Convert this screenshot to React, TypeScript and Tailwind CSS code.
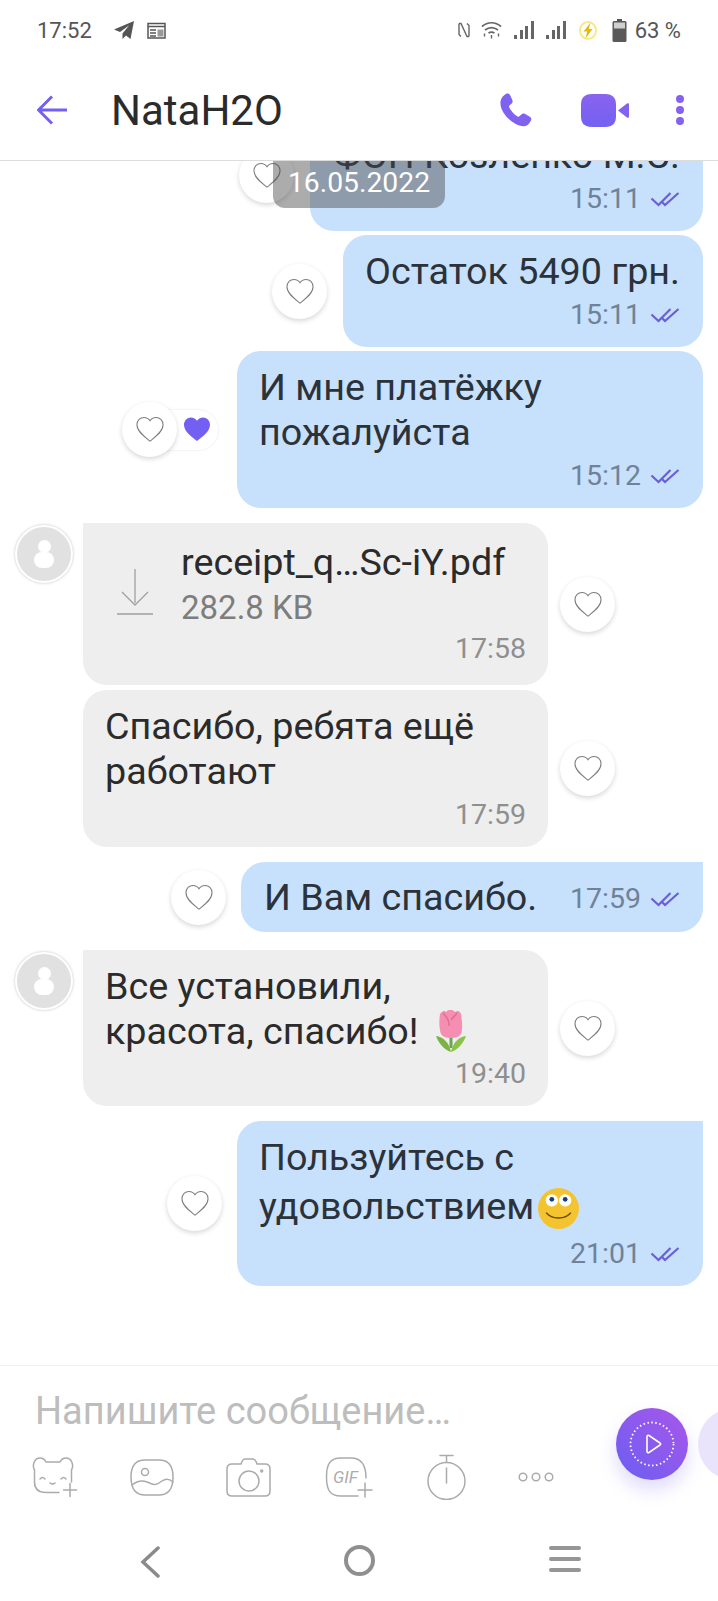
import React from "react";

const Heart = ({ filled = false }: { filled?: boolean }) => (
  <svg width="30" height="27" viewBox="0 0 30 28" fill={filled ? "#7360f2" : "none"} stroke={filled ? "none" : "#7d7d7d"} strokeWidth="1.1">
    <path d="M15 26C10 22 1.5 16.5 1.5 9.2 1.5 4.6 4.9 1.5 8.7 1.5c2.8 0 5 1.3 6.3 3.5 1.3-2.2 3.5-3.5 6.3-3.5 3.8 0 7.2 3.1 7.2 7.7C28.500 16.500 20 22 15 26Z" />
  </svg>
);

const HeartBtn = () => (
  <div className="w-[55px] h-[55px] rounded-full bg-white shadow-[0_2px_5px_rgba(0,0,0,0.16)] flex items-center justify-center shrink-0 relative z-10">
    <Heart />
  </div>
);

const Check = () => (
  <svg width="30" height="16" viewBox="0 0 29 16" fill="none" stroke="#6a5fd8" strokeWidth="2.2" className="ml-[9px]">
    <path d="M1 7.500l7 6.500L20 2" />
    <path d="M11 10.500l3.500 3.500L28 2" />
  </svg>
);

const Time = ({ t, out = false }: { t: string; out?: boolean }) => (
  <span className={`text-[28.5px] leading-[38px] flex items-center ${out ? "text-[#6f8298]" : "text-[#8f8f8f]"}`}>
    {t}
    {out && <Check />}
  </span>
);

const Out = ({
  lines,
  t,
  w,
  gap,
  mt,
  heart,
  tail = false,
}: {
  lines: React.ReactNode[];
  t: string;
  w: number;
  gap: number;
  mt: number;
  heart?: React.ReactNode;
  tail?: boolean;
}) => (
  <div className="flex justify-end items-center pr-[15px]" style={{ marginTop: mt }}>
    <div style={{ marginRight: gap }}>{heart ?? <HeartBtn />}</div>
    <div
      className={`bg-[#c7e0fb] rounded-[24px] pl-[22px] pr-[23px] pt-[14px] pb-[13px] text-[#2b323a] ${tail ? "rounded-tr-none" : ""}`}
      style={{ width: w }}
    >
      {lines.map((l, i) => (
        <div key={i} className="leading-[45px] whitespace-nowrap">
          {l}
        </div>
      ))}
      <div className="flex justify-end mt-[2px]">
        <Time t={t} out />
      </div>
    </div>
  </div>
);

const Avatar = () => (
  <div className="w-[58px] h-[58px] rounded-full bg-[#e1e1e1] border-2 border-white shadow-[0_0_3px_rgba(0,0,0,0.25)] flex flex-col items-center justify-center shrink-0 self-start mt-[2px]">
    <div className="w-[13px] h-[13px] rounded-full bg-white" />
    <div className="w-[20px] h-[16px] rounded-[8px] bg-white -mt-[1px]" />
  </div>
);

const In = ({ children, t, mt, avatar = false, h, pb = 13 }: { children: React.ReactNode; t: string; mt: number; avatar?: boolean; h: number; pb?: number }) => (
  <div className="flex items-center pl-[15px]" style={{ marginTop: mt }}>
    <div className="w-[58px] mr-[10px] self-start shrink-0">{avatar && <Avatar />}</div>
    <div
      className={`bg-[#eeeeee] rounded-[24px] w-[465px] flex flex-col px-[22px] pt-[14px] text-[#2b2b2b] ${avatar ? "rounded-tl-none" : ""}`}
      style={{ height: h, paddingBottom: pb }}
    >
      <div className="flex-1">{children}</div>
      <div className="flex justify-end">
        <Time t={t} />
      </div>
    </div>
    <div className="ml-[12px]">
      <HeartBtn />
    </div>
  </div>
);

const Tulip = () => (
  <svg width="30" height="42" viewBox="0 0 30 42" className="inline-block align-middle ml-[18px] -translate-y-[3px]">
    <path d="M15 26v12" stroke="#6aa84f" strokeWidth="3" />
    <path d="M15 42C8 40 2 32 0 26c7 1 13 6 15 16Z" fill="#7cb342" />
    <path d="M15 42c7-2 13-10 15-16-7 1-13 6-15 16Z" fill="#8bc34a" />
    <path d="M4 4c2-3 5-4 6-2 2-3 7-3 9 0 2-2 5-1 6 2 1 7 2 14 0 20-2 3-6 4-10 4s-8-1-10-4C3 18 3 11 4 4Z" fill="#f48fb1" />
    <path d="M7 3c3 3 7 7 6 13M21 3c-2 3-5 5-6 7" stroke="#e56a98" strokeWidth="1.500" fill="none" />
  </svg>
);

const Smile = () => (
  <svg width="41" height="41" viewBox="0 0 40 40" className="inline-block align-middle ml-[4px] translate-y-[-1px]">
    <circle cx="20" cy="20" r="20" fill="#f4c430" />
    <ellipse cx="13.500" cy="12" rx="6" ry="6" fill="#fff" />
    <ellipse cx="26.500" cy="12" rx="6" ry="6" fill="#fff" />
    <circle cx="13.500" cy="11" r="2.300" fill="#1c3c78" />
    <circle cx="26.500" cy="11" r="2.300" fill="#1c3c78" />
    <path d="M8 24c5 7 19 7 24 0" stroke="#6b4a10" strokeWidth="1.500" fill="none" />
  </svg>
);

const ToolIcon = ({ children, w = 46, cls = "" }: { children: React.ReactNode; w?: number; cls?: string }) => (
  <svg width={w} height="46" viewBox={`0 0 ${w} 46`} fill="none" stroke="#ababab" strokeWidth="1.500" strokeLinecap="round" className={`shrink-0 ${cls}`}>
    {children}
  </svg>
);

const Signal = ({ cls }: { cls: string }) => (
  <svg width="20" height="18" viewBox="0 0 20 18" fill="#666" className={cls}>
    <rect x="0" y="14" width="3" height="4" />
    <rect x="6" y="9" width="3" height="9" />
    <rect x="11" y="5" width="3" height="13" />
    <rect x="17" y="0" width="3" height="18" />
  </svg>
);

export default function App() {
  return (
    <div className="w-[718px] h-[1601px] bg-white flex flex-col overflow-hidden relative font-['Roboto',sans-serif] text-[37.7px]">
      {/* status bar */}
      <div className="h-[60px] flex items-center pl-[37px] pr-[37px] text-[22px] text-[#555555] shrink-0">
        <span>17:52</span>
        <svg width="21" height="20" viewBox="0 0 21 20" className="ml-[22px]" fill="#555">
          <path d="M20 1 0 9.500l6 2.500 9-6.500-6.500 8V19l3.500-3.500 4.500 3.500Z" />
        </svg>
        <svg width="19" height="17" viewBox="0 0 19 17" className="ml-[12px]" fill="none" stroke="#555" strokeWidth="1.500">
          <rect x="1" y="1.500" width="17" height="14.500" />
          <path d="M1 4.500h17M3 8h6M3 11h6M3 14h6" />
          <rect x="10.500" y="7.500" width="6" height="7" fill="#999" stroke="none" />
        </svg>
        <div className="flex-1" />
        <svg width="14" height="16" viewBox="0 0 14 16" fill="none" stroke="#666" strokeWidth="1.400">
          <path d="M2 1.500h2l6 13h2M2 1.500v11l2 2h0M12 14.500v-11l-2-2" />
        </svg>
        <svg width="21" height="18" viewBox="0 0 21 18" className="ml-[10px]" fill="none" stroke="#666" strokeWidth="1.700">
          <path d="M1 5.500c5.500-5 13.500-5 19 0M4 9c4-3 9-3 13 0M7.500 12c2-1.300 4-1.300 6 0" />
          <path d="M10.500 14v3.500M3.500 12.500v3M17.500 12.500v3" strokeWidth="1.400" />
        </svg>
        <Signal cls="ml-[12px]" />
        <Signal cls="ml-[12px]" />
        <svg width="18" height="19" viewBox="0 0 18 19" className="ml-[13px]">
          <ellipse cx="9" cy="9.500" rx="8" ry="8.500" fill="none" stroke="#f7e88a" strokeWidth="2" />
          <path d="M11.500 1.500 4.500 10.500h3.700L6.500 17.500 13.500 8h-3.700Z" fill="#e7b90f" />
        </svg>
        <svg width="15" height="23" viewBox="0 0 15 23" className="ml-[15px]">
          <rect x="5" y="0" width="5" height="2.500" fill="#555" />
          <rect x="0.500" y="2" width="14" height="21" rx="1.500" fill="#595959" />
          <rect x="2" y="3.500" width="11" height="6" fill="#cfcfcf" />
        </svg>
        <span className="ml-[8px]">63 %</span>
      </div>

      {/* header */}
      <div className="h-[101px] shrink-0 border-b border-[#dcdcdc] flex items-center pl-[37px] pr-[34px] bg-white relative z-20">
        <svg width="30" height="30" viewBox="0 0 30 30" fill="none" stroke="#7360f2" strokeWidth="3">
          <path d="M30 15H2M15 1.500 1.500 15 15 28.500" />
        </svg>
        <span className="ml-[44px] text-[42px] text-[#2b2b2b]">NataH2O</span>
        <div className="flex-1" />
        <svg width="37" height="37" viewBox="0 0 24 24" fill="#7f62ef">
          <path d="M6.600 1.200c1-.6 2-.2 2.500.8l1.500 3.200c.4.800.2 1.700-.4 2.300L8.700 8.800c-.3.300-.3.600-.2 1 .9 2.200 3.500 5.200 5.700 6.200.4.200.7.100 1-.2l1.400-1.300c.6-.6 1.500-.7 2.300-.2l3 1.800c1 .6 1.300 1.700.7 2.600-1 1.900-2.500 3.700-4.700 3.500C10.200 21.600 2.300 12.800 2.900 6.400 3.100 4 4.800 2.300 6.600 1.200Z" />
        </svg>
        <svg width="48" height="33" viewBox="0 0 48 33" className="ml-[48px]">
          <defs>
            <linearGradient id="vg" x1="0" y1="0" x2="0" y2="1">
              <stop offset="0" stopColor="#8a63ee" />
              <stop offset="1" stopColor="#7360f2" />
            </linearGradient>
          </defs>
          <path d="M11 0h13c8 0 11 4 11 11v11c0 7-3 11-11 11H11C3 33 0 29 0 22V11C0 4 3 0 11 0Z" fill="url(#vg)" />
          <path d="M37 16.500 46 9.500c1-.7 2 0 2 1v12c0 1-1 1.700-2 1Z" fill="#8462ef" />
        </svg>
        <div className="ml-[47px] flex flex-col gap-[3px]">
          <div className="w-[8px] h-[8px] rounded-full bg-[#8462ef]" />
          <div className="w-[8px] h-[8px] rounded-full bg-[#8462ef]" />
          <div className="w-[8px] h-[8px] rounded-full bg-[#8462ef]" />
        </div>
      </div>

      {/* messages */}
      <div className="h-[1204px] shrink-0 overflow-hidden relative">
        <Out
          mt={-42}
          w={393}
          gap={16}
          lines={[<span className="block text-right">ФОП Козленко М.С.</span>]}
          t="15:11"
        />
        <Out mt={4} w={360} gap={16} lines={["Остаток 5490 грн."]} t="15:11" />
        <Out
          mt={4}
          w={466}
          gap={19}
          lines={["И мне платёжку", "пожалуйста"]}
          t="15:12"
          heart={
            <div className="relative flex items-center">
              <HeartBtn />
              <div className="-ml-[22px] h-[40px] w-[63px] rounded-r-full bg-white shadow-[0_0_3px_rgba(0,0,0,0.1)] flex items-center justify-end pr-[6px]">
                <Heart filled />
              </div>
            </div>
          }
        />
        <In mt={15} h={162} pb={17} t="17:58" avatar>
          <div className="flex items-start">
            <svg width="36" height="46" viewBox="0 0 36 46" fill="none" stroke="#a0a0a0" strokeWidth="1.300" className="ml-[12px] mt-[32px]">
              <path d="M18 0v34M5 23l13 13 13-13M0 45h36" />
            </svg>
            <div className="ml-[28px] mt-[3px]">
              <div className="leading-[45px] whitespace-nowrap">receipt_q…Sc-iY.pdf</div>
              <div className="text-[#7d7d7d] text-[33px] leading-[45px]">282.8 KB</div>
            </div>
          </div>
        </In>
        <In mt={5} h={157} t="17:59">
          <div className="leading-[45px]">Спасибо, ребята ещё</div>
          <div className="leading-[45px]">работают</div>
        </In>
        <div className="flex justify-end items-center pr-[15px] mt-[15px]">
          <div className="mr-[15px]">
            <HeartBtn />
          </div>
          <div className="bg-[#c7e0fb] rounded-[24px] rounded-tr-none w-[462px] h-[70px] pl-[23px] pr-[23px] flex items-center justify-between text-[#2b323a]">
            <span>И Вам спасибо.</span>
            <span className="pt-[3px]">
              <Time t="17:59" out />
            </span>
          </div>
        </div>
        <In mt={18} h={156} t="19:40" avatar>
          <div className="leading-[45px]">Все установили,</div>
          <div className="leading-[45px] whitespace-nowrap">
            красота, спасибо!
            <Tulip />
          </div>
        </In>
        <Out
          mt={15}
          w={466}
          gap={15}
          tail
          lines={[
            "Пользуйтесь с",
            <span className="block h-[53px] leading-[53px]">
              удовольствием
              <Smile />
            </span>,
          ]}
          t="21:01"
        />
        <div className="absolute top-0 left-[273px] w-[172px] h-[47px] pb-[2px] rounded-b-[12px] bg-[rgba(70,70,70,0.45)] flex items-center justify-center text-white text-[28.300px] z-20">
          16.05.2022
        </div>
      </div>

      {/* composer */}
      <div className="border-t border-[#f0f0f0] flex-1 relative pl-[35px]">
        <div className="text-[38px] text-[#bdbdbd] leading-[44px] mt-[23px]">Напишите сообщение…</div>
        <div className="flex items-center mt-[21px] -ml-[3px]">
          <ToolIcon>
            <path d="M27 38.500H14C6 38.500 2.500 34 2.500 28V16C0 12 2 4 8 4c3 0 5 2 6 4h14c1-2 3-4 6-4 6 0 8 8 5.500 12v12" />
            <path d="M8 25q2.500-3 5 0M29 25q2.500-3 5 0M18 29q2.500 2 5 0M38 29.500v13M31.500 36h13" />
          </ToolIcon>
          <ToolIcon cls="ml-[51px]">
            <path d="M16 6h14c10 0 14 6 14 17s-4 18-14 18H16C6 41 2 34 2 23S6 6 16 6Z" />
            <circle cx="16" cy="18" r="3.500" />
            <path d="M3 31c5-4 10-5 15-3s8 4 12 1 8-6 14-1" />
          </ToolIcon>
          <ToolIcon cls="ml-[51px]">
            <path d="M6 10h9c1-3 2-5 4-5h8c2 0 3 2 4 5h8c3 0 5 2 5 5v22c0 3-2 5-5 5H6c-3 0-5-2-5-5V15c0-3 2-5 5-5Z" />
            <circle cx="23" cy="27" r="10" />
            <circle cx="35.700" cy="17" r="1" />
          </ToolIcon>
          <svg width="48" height="46" viewBox="0 0 48 46" fill="none" stroke="#ababab" strokeWidth="1.500" strokeLinecap="round" className="ml-[53px] shrink-0">
            <path d="M33 42H16C5 42 1.500 36 1.500 23S5 4 16 4h10c10 0 15 6 15 20" />
            <text x="8" y="29" fontSize="17" fontStyle="italic" fill="#ababab" stroke="none" fontFamily="Roboto">GIF</text>
            <path d="M40 29v14M33 36h14" />
          </svg>
          <ToolIcon w={42} cls="ml-[52px]">
            <circle cx="21.500" cy="27" r="18.500" />
            <path d="M21.500 8V2M15 1.500h13M21.500 14v15" />
          </ToolIcon>
          <svg width="38" height="12" viewBox="0 0 38 12" fill="none" stroke="#ababab" strokeWidth="1.500" className="ml-[50px] shrink-0">
            <circle cx="6" cy="6" r="3.800" />
            <circle cx="19" cy="6" r="3.800" />
            <circle cx="32" cy="6" r="3.800" />
          </svg>
        </div>
        <div className="absolute left-[616px] top-[42px] w-[72px] h-[72px] rounded-full bg-gradient-to-tr from-[#6a5df2] to-[#a855ea] shadow-[0_10px_18px_rgba(115,96,242,0.22)] flex items-center justify-center">
          <svg width="46" height="46" viewBox="0 0 46 46" fill="none" stroke="#fff">
            <circle cx="23" cy="23" r="21.500" strokeWidth="1.800" strokeDasharray="1.500 2.500" />
            <path d="M18 15.500v15c0 1 1 1.500 2 1l11-7.500c.800-.500.800-1.500 0-2l-11-7.500c-1-.500-2 0-2 1Z" strokeWidth="1.600" />
          </svg>
        </div>
        <div className="absolute left-[698px] top-[42px] w-[72px] h-[72px] rounded-full bg-[#e9e4fb]" />
        <div className="absolute left-0 right-0 top-[180px] flex items-center">
          <svg width="24" height="32" viewBox="0 0 24 32" fill="none" stroke="#8a8a8a" strokeWidth="3.500" className="absolute left-[139px] top-0" strokeLinecap="round">
            <path d="M19 2 4 16l15 14" />
          </svg>
          <div className="absolute left-[344px] -top-[1px] w-[31px] h-[31px] rounded-full border-[4px] border-[#8f8f8f]" />
          <div className="absolute left-[549px] top-0 w-[32px] flex flex-col gap-[7px]">
            <div className="h-[4px] rounded bg-[#969696]" />
            <div className="h-[4px] rounded bg-[#969696]" />
            <div className="h-[4px] rounded bg-[#969696]" />
          </div>
        </div>
      </div>
    </div>
  );
}
